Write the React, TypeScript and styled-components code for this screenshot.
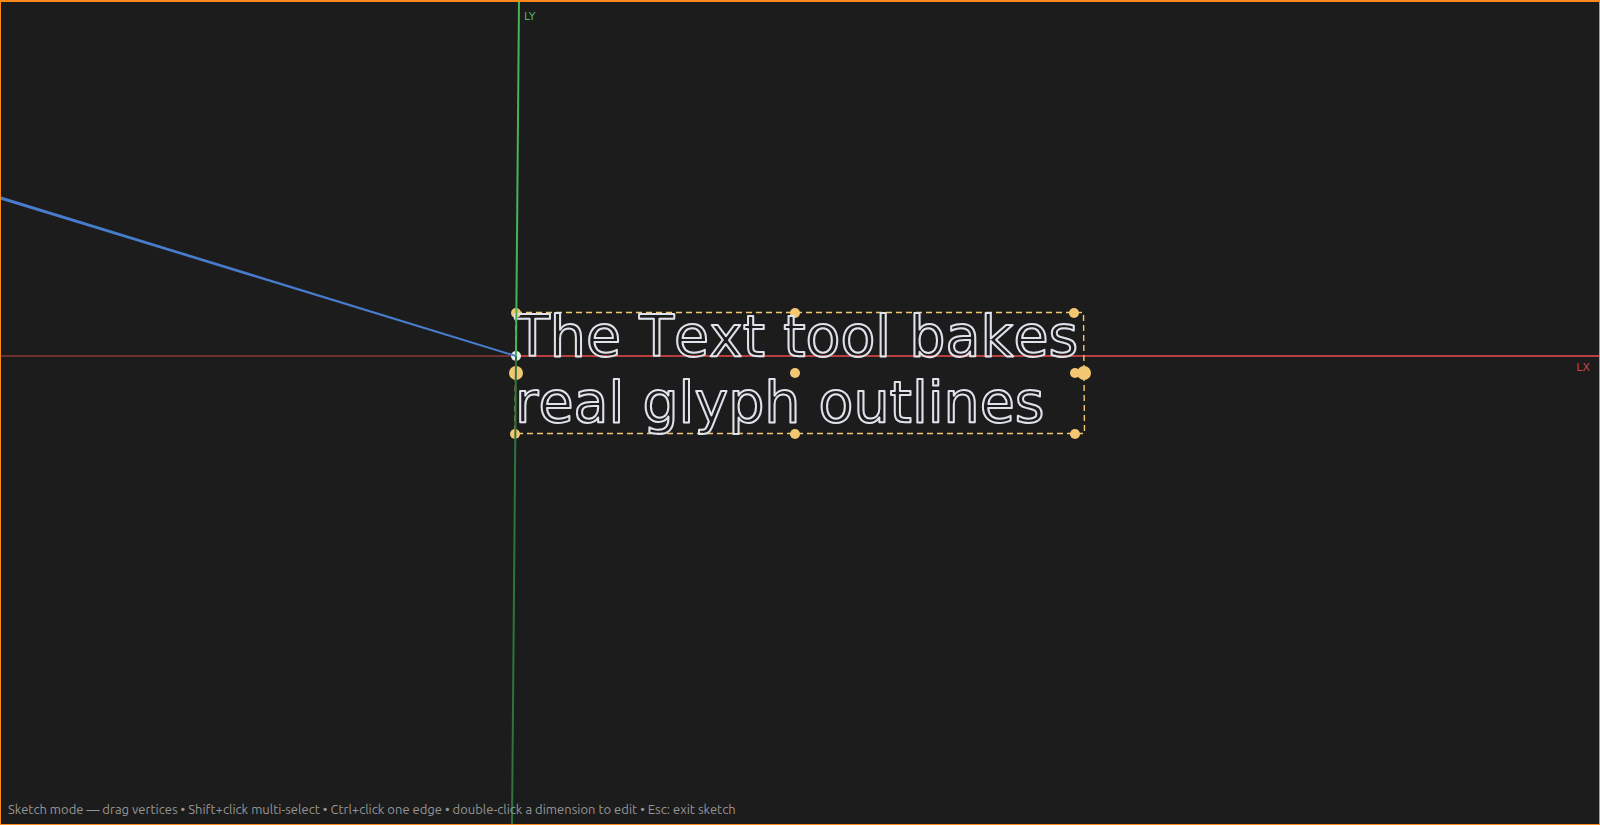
import React from "react";
import styled, { createGlobalStyle } from "styled-components";

const GlobalStyle = createGlobalStyle`
  * { box-sizing: border-box; }
  body { margin: 0; background: #1c1c1c; }
`;

const Viewport = styled.main`
  position: relative;
  display: flex;
  flex-direction: column;
  justify-content: flex-end;
  width: 100%;
  height: 100vh;
  overflow: hidden;
  background: #1c1c1c;
  border: 1px solid #fb8a1e;
  border-top-width: 2px;
`;

const Scene = styled.svg`
  position: absolute;
  inset: 0;
  width: 100%;
  height: 100%;
`;

const AxisLabel = styled.text<{ $color: string }>`
  font: 11px "DejaVu Sans", sans-serif;
  fill: ${(p) => p.$color};
`;

const AxisLine = styled.line<{ $color: string }>`
  stroke: ${(p) => p.$color};
  stroke-width: 2px;
`;

const GlyphOutline = styled.text`
  font: 57px "DejaVu Sans", sans-serif;
  font-kerning: none;
  fill: none;
  stroke: #dfe2ea;
  stroke-width: 2px;
  stroke-linejoin: round;
`;

const TextFrame = styled.path`
  fill: none;
  stroke: #f3c772;
  stroke-width: 1.4;
  stroke-dasharray: 6 4;
`;

const Handle = styled.circle`
  fill: #f3c772;
`;

const Hint = styled.p`
  position: relative;
  margin: 0;
  padding: 0 7px 6px;
  font: 13px/18px Ubuntu, system-ui, "Noto Sans", sans-serif;
  color: #959595;
`;

const handles = [
  [515, 311, 5], [794, 311, 5], [1073, 311, 5],
  [515, 371, 7], [794, 371, 5], [1074, 371, 5], [1083, 371, 7],
  [514, 432, 5], [794, 432, 5], [1074, 432, 5],
];

export default function App() {
  return (
    <>
      <GlobalStyle />
      <Viewport>
        <Scene role="img" aria-label="Sketch canvas">
          <AxisLine x1="0" y1="354" x2="515" y2="354" $color="#6f3030" />
          <AxisLine x1="515" y1="354" x2="100%" y2="354" $color="#b83f3f" />
          <TextFrame d="M515 310.5H1082.500L1083.500 431.500H514Z" />
          {handles.map(([x, y, r]) => (
            <Handle key={`${x}-${y}`} cx={x} cy={y} r={r} />
          ))}
          <circle cx="515" cy="354" r="5" fill="#e8ecee" />
          <GlyphOutline x="514" y="354">The Text tool bakes</GlyphOutline>
          <GlyphOutline x="514" y="420">real glyph outlines</GlyphOutline>
          <path d="M-1 194.300L515 353L515 355L-1 197.500Z" fill="#487dce" />
          <AxisLine x1="518" y1="-2" x2="515" y2="354" $color="#46b355" />
          <AxisLine x1="515" y1="354" x2="511" y2="824" $color="#2f753b" />
          <AxisLabel x="523" y="18" $color="#4fb45c">LY</AxisLabel>
          <AxisLabel x="100%" dx="-9" y="369" textAnchor="end" $color="#c44848">LX</AxisLabel>
        </Scene>
        <Hint>
          Sketch mode — drag vertices • Shift+click multi-select • Ctrl+click one edge • double-click a dimension to edit • Esc: exit sketch
        </Hint>
      </Viewport>
    </>
  );
}
